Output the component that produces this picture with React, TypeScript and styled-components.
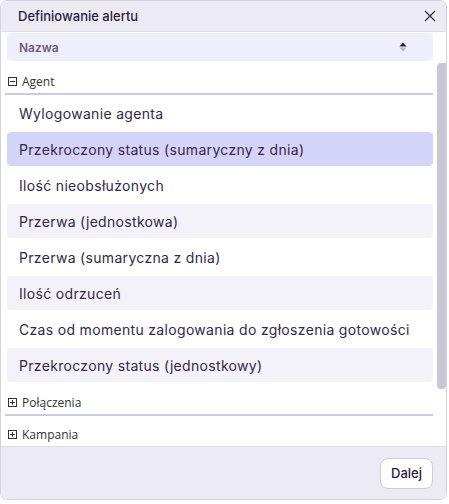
import styled, { createGlobalStyle } from 'styled-components';

const GlobalStyle = createGlobalStyle`
  html, body {
    margin: 0;
    padding: 0;
    background: #ffffff;
  }
  * {
    box-sizing: border-box;
  }
`;

const Dialog = styled.div`
  width: 447px;
  height: 500px;
  display: flex;
  flex-direction: column;
  border: 1px solid #d4d2e4;
  border-radius: 7px;
  overflow: hidden;
  background: #ffffff;
  font-family: Inter, "Open Sans", sans-serif;
  color: #2f2340;
`;

const TitleBar = styled.div`
  height: 31px;
  flex: none;
  display: flex;
  align-items: center;
  justify-content: space-between;
  padding: 0 8px 0 17px;
  background: #ecebf4;
  border-bottom: 1px solid #e0dfea;
  font-size: 13px;
  font-weight: 500;
  color: #2a1d3c;
`;

const CloseButton = styled.button`
  border: none;
  background: transparent;
  padding: 0;
  width: 16px;
  height: 16px;
  display: flex;
  align-items: center;
  justify-content: center;
  cursor: pointer;
`;

const SortHeader = styled.div`
  flex: none;
  margin: 1px 13px 0 6px;
  height: 28px;
  display: flex;
  align-items: center;
  justify-content: space-between;
  padding: 0 26px 0 12px;
  background: #eeeefc;
  border-radius: 4px;
  font-size: 12px;
  font-weight: 600;
  color: #6d5d82;
`;

const ScrollArea = styled.div`
  flex: 1;
  display: flex;
  min-height: 0;
  margin-top: 2px;
`;

const ListColumn = styled.div`
  flex: 1;
  min-width: 0;
  padding: 0 4px 0 4px;
  overflow: hidden;
`;

const Scrollbar = styled.div`
  width: 9px;
  flex: none;
`;

const Thumb = styled.div`
  height: 326px;
  background: #c8c7d3;
  border-radius: 4px 0 4px 4px;
`;

const GroupHeader = styled.div`
  height: 32px;
  display: flex;
  align-items: center;
  gap: 5px;
  padding: 6px 0 0 3px;
  border-bottom: 2px solid #cbcae6;
  font-family: "Open Sans", "Noto Sans", sans-serif;
  font-size: 12px;
  color: #333333;
`;

const ToggleBox = styled.svg`
  flex: none;
`;

const Items = styled.div`
  display: flex;
  flex-direction: column;
  gap: 2px;
  padding: 1px 0 2px 2px;
`;

const Item = styled.div<{ $variant?: 'selected' | 'striped' | 'plain' }>`
  height: 34px;
  display: flex;
  align-items: center;
  padding: 0 12px;
  border-radius: 4px;
  font-size: 14px;
  letter-spacing: 0.32px;
  color: #35284a;
  background: ${({ $variant }) =>
    $variant === 'selected' ? '#d4d4f8' : $variant === 'striped' ? '#f3f2f8' : 'transparent'};
`;

const Footer = styled.div`
  flex: none;
  height: 53px;
  display: flex;
  align-items: center;
  justify-content: flex-end;
  padding: 0 13px 0 0;
  background: #ecebf4;
  border-top: 1px solid #dddcea;
`;

const PrimaryButton = styled.button`
  height: 31px;
  padding: 0 10px;
  border: 1px solid #cfcbe0;
  border-radius: 8px;
  background: #ffffff;
  font-family: Inter, "Open Sans", sans-serif;
  font-size: 13px;
  font-weight: 500;
  color: #2a1d3c;
  cursor: pointer;
`;

function Toggle({ open }: { open: boolean }) {
  return (
    <ToggleBox width="9" height="9" viewBox="0 0 9 9">
      <rect x="0.5" y="0.5" width="8" height="8" fill="#fff" stroke="#333" strokeWidth="1" />
      <line x1="2" y1="4.5" x2="7" y2="4.5" stroke="#333" strokeWidth="1" />
      {!open && <line x1="4.5" y1="2" x2="4.5" y2="7" stroke="#333" strokeWidth="1" />}
    </ToggleBox>
  );
}

const agentItems = [
  'Wylogowanie agenta',
  'Przekroczony status (sumaryczny z dnia)',
  'Ilość nieobsłużonych',
  'Przerwa (jednostkowa)',
  'Przerwa (sumaryczna z dnia)',
  'Ilość odrzuceń',
  'Czas od momentu zalogowania do zgłoszenia gotowości',
  'Przekroczony status (jednostkowy)',
];

export default function App() {
  return (
    <>
      <GlobalStyle />
      <Dialog>
        <TitleBar>
          <span>Definiowanie alertu</span>
          <CloseButton aria-label="Zamknij">
            <svg width="12" height="12" viewBox="0 0 12 12">
              <path d="M1 1 L11 11 M11 1 L1 11" stroke="#333" strokeWidth="1.3" />
            </svg>
          </CloseButton>
        </TitleBar>
        <SortHeader>
          <span>Nazwa</span>
          <svg width="8" height="10" viewBox="0 0 8 10">
            <path d="M4 0.5 L7.5 4.5 L0.5 4.5 Z" fill="#2a1d50" />
            <path d="M4 9.5 L7.5 5.5 L0.5 5.5 Z" fill="#b9b7c4" />
          </svg>
        </SortHeader>
        <ScrollArea>
          <ListColumn>
            <GroupHeader>
              <Toggle open />
              <span>Agent</span>
            </GroupHeader>
            <Items>
              {agentItems.map((label, i) => (
                <Item
                  key={label}
                  $variant={i === 1 ? 'selected' : i % 2 === 1 ? 'striped' : 'plain'}
                >
                  {label}
                </Item>
              ))}
            </Items>
            <GroupHeader>
              <Toggle open={false} />
              <span>Połączenia</span>
            </GroupHeader>
            <GroupHeader>
              <Toggle open={false} />
              <span>Kampania</span>
            </GroupHeader>
          </ListColumn>
          <Scrollbar>
            <Thumb />
          </Scrollbar>
        </ScrollArea>
        <Footer>
          <PrimaryButton>Dalej</PrimaryButton>
        </Footer>
      </Dialog>
    </>
  );
}
